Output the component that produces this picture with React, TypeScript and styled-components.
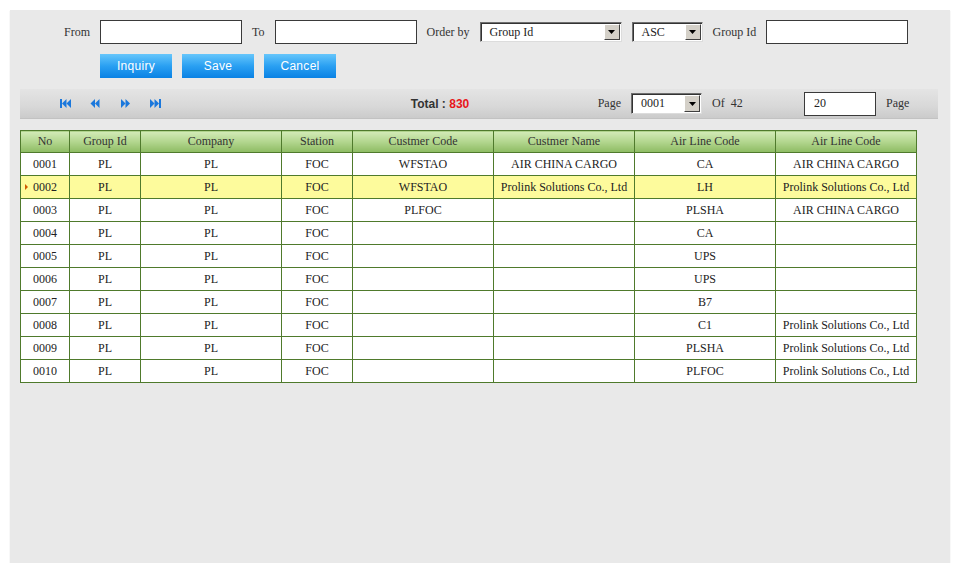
import styled, { createGlobalStyle } from 'styled-components'

const GlobalStyle = createGlobalStyle`
  body {
    margin: 0;
    background: #ffffff;
    font-family: "Liberation Serif", "Times New Roman", serif;
    font-size: 12px;
    color: #222;
  }
`;

type Row = {
  no: string;
  group: string;
  company: string;
  station: string;
  custCode: string;
  custName: string;
  airCode: string;
  airName: string;
};

const rows: Row[] = [
  { no: '0001', group: 'PL', company: 'PL', station: 'FOC', custCode: 'WFSTAO', custName: 'AIR CHINA CARGO', airCode: 'CA', airName: 'AIR CHINA CARGO' },
  { no: '0002', group: 'PL', company: 'PL', station: 'FOC', custCode: 'WFSTAO', custName: 'Prolink Solutions Co., Ltd', airCode: 'LH', airName: 'Prolink Solutions Co., Ltd' },
  { no: '0003', group: 'PL', company: 'PL', station: 'FOC', custCode: 'PLFOC', custName: '', airCode: 'PLSHA', airName: 'AIR CHINA CARGO' },
  { no: '0004', group: 'PL', company: 'PL', station: 'FOC', custCode: '', custName: '', airCode: 'CA', airName: '' },
  { no: '0005', group: 'PL', company: 'PL', station: 'FOC', custCode: '', custName: '', airCode: 'UPS', airName: '' },
  { no: '0006', group: 'PL', company: 'PL', station: 'FOC', custCode: '', custName: '', airCode: 'UPS', airName: '' },
  { no: '0007', group: 'PL', company: 'PL', station: 'FOC', custCode: '', custName: '', airCode: 'B7', airName: '' },
  { no: '0008', group: 'PL', company: 'PL', station: 'FOC', custCode: '', custName: '', airCode: 'C1', airName: 'Prolink Solutions Co., Ltd' },
  { no: '0009', group: 'PL', company: 'PL', station: 'FOC', custCode: '', custName: '', airCode: 'PLSHA', airName: 'Prolink Solutions Co., Ltd' },
  { no: '0010', group: 'PL', company: 'PL', station: 'FOC', custCode: '', custName: '', airCode: 'PLFOC', airName: 'Prolink Solutions Co., Ltd' },
];

const columns = ['No', 'Group Id', 'Company', 'Station', 'Custmer Code', 'Custmer Name', 'Air Line Code', 'Air Line Code'];
const widths = [49, 71, 141, 71, 141, 141, 141, 141];

const FakeSelect = ({ value, width, height }: { value: string; width: number; height: number }) => (
  <SelectBox $width={width} $height={height}>
    <SelectText>{value}</SelectText>
    <SelectArrow>
      <svg width="7" height="4" viewBox="0 0 7 4">
        <polygon points="0,0 7,0 3.5,4" fill="#000" />
      </svg>
    </SelectArrow>
  </SelectBox>
);

const NavIcon = ({ kind }: { kind: 'first' | 'prev' | 'next' | 'last' }) => (
  <NavButton>
    <svg width="11" height="9" viewBox="0 0 11 9" fill="#1b78dc">
      {kind === 'first' && (
        <>
          <rect x="0" y="0" width="2" height="9" />
          <polygon points="6.5,0 2,4.5 6.5,9" />
          <polygon points="11,0 6.5,4.5 11,9" />
        </>
      )}
      {kind === 'prev' && (
        <>
          <polygon points="5,0 0.5,4.5 5,9" />
          <polygon points="9.5,0 5,4.5 9.5,9" />
        </>
      )}
      {kind === 'next' && (
        <>
          <polygon points="1,0 5.5,4.5 1,9" />
          <polygon points="5.5,0 10,4.5 5.5,9" />
        </>
      )}
      {kind === 'last' && (
        <>
          <polygon points="0,0 4.5,4.5 0,9" />
          <polygon points="4.5,0 9,4.5 4.5,9" />
          <rect x="9" y="0" width="2" height="9" />
        </>
      )}
    </svg>
  </NavButton>
);

const App = () => {
  return (
    <>
      <GlobalStyle />
      <Panel>
        <FilterRow>
          <Label>From</Label>
          <TextInput $width={142} />
          <Label>To</Label>
          <TextInput $width={142} />
          <Label>Order by</Label>
          <FakeSelect value="Group Id" width={142} height={20} />
          <FakeSelect value="ASC" width={71} height={20} />
          <Label>Group Id</Label>
          <TextInput $width={142} />
        </FilterRow>
        <ButtonRow>
          <BlueButton>Inquiry</BlueButton>
          <BlueButton>Save</BlueButton>
          <BlueButton>Cancel</BlueButton>
        </ButtonRow>
        <Toolbar>
          <NavGroup>
            <NavIcon kind="first" />
            <NavIcon kind="prev" />
            <NavIcon kind="next" />
            <NavIcon kind="last" />
          </NavGroup>
          <TotalBox>
            Total : <TotalNum>830</TotalNum>
          </TotalBox>
          <PageLabelBox>Page</PageLabelBox>
          <FakeSelect value="0001" width={71} height={21} />
          <OfBox>Of&nbsp;&nbsp;42</OfBox>
          <TextInput $width={72} defaultValue="20" />
          <TailLabel>Page</TailLabel>
        </Toolbar>
        <Grid>
          <colgroup>
            {widths.map((w, i) => (
              <col key={i} style={{ width: w }} />
            ))}
          </colgroup>
          <thead>
            <tr>
              {columns.map((c, i) => (
                <HeadCell key={i}>{c}</HeadCell>
              ))}
            </tr>
          </thead>
          <tbody>
            {rows.map((r) => {
              const active = r.no === '0002';
              return (
                <BodyRow key={r.no} $active={active}>
                  <Cell>
                    {active && <Marker />}
                    {r.no}
                  </Cell>
                  <Cell>{r.group}</Cell>
                  <Cell>{r.company}</Cell>
                  <Cell>{r.station}</Cell>
                  <Cell>{r.custCode}</Cell>
                  <Cell>{r.custName}</Cell>
                  <Cell>{r.airCode}</Cell>
                  <Cell>{r.airName}</Cell>
                </BodyRow>
              );
            })}
          </tbody>
        </Grid>
      </Panel>
    </>
  )
}

const Panel = styled.div`
  margin: 10px 0 0 10px;
  width: 940px;
  height: 553px;
  box-sizing: border-box;
  background: #e9e9e9;
  padding: 10px 0 0 10px;
  box-shadow: 0 1px 1px #d4d4d4;
`;

const FilterRow = styled.div`
  display: flex;
  align-items: center;
  gap: 10px;
  padding-left: 44px;
  height: 24px;
`;

const Label = styled.span`
  color: #333;
  font-size: 12px;
  white-space: nowrap;
`;

const TailLabel = styled(Label)`
  margin-left: 10px;
`;

const TextInput = styled.input<{ $width: number }>`
  width: ${(p) => p.$width}px;
  height: 24px;
  box-sizing: border-box;
  border: 1px solid #3a3a3a;
  background: #fff;
  padding: 0 0 0 9px;
  font-family: "Liberation Serif", serif;
  font-size: 12px;
  color: #222;
  outline: none;
`;

const SelectBox = styled.div<{ $width: number; $height: number }>`
  width: ${(p) => p.$width}px;
  height: ${(p) => p.$height}px;
  box-sizing: border-box;
  display: flex;
  align-items: center;
  background: #fff;
  border-top: 1px solid #6f6f6f;
  border-left: 1px solid #6f6f6f;
  border-bottom: 1px solid #dcdcdc;
  border-right: 1px solid #dcdcdc;
  box-shadow: inset 1px 1px 0 #333;
  padding: 1px;
`;

const SelectText = styled.span`
  flex: 1;
  padding-left: 8px;
  font-size: 12px;
  color: #222;
`;

const SelectArrow = styled.div`
  width: 16px;
  height: 100%;
  box-sizing: border-box;
  background: #d4d0c8;
  border-top: 1px solid #fff;
  border-left: 1px solid #fff;
  border-right: 1px solid #404040;
  border-bottom: 1px solid #404040;
  display: flex;
  align-items: center;
  justify-content: center;
`;

const ButtonRow = styled.div`
  display: flex;
  gap: 10px;
  margin-top: 10px;
  padding-left: 80px;
`;

const BlueButton = styled.button`
  width: 72px;
  height: 24px;
  border: none;
  padding: 0;
  background: linear-gradient(to bottom, #66c6fb 0%, #2aa0f2 50%, #0a82e4 100%);
  color: #fff;
  font-family: "Liberation Sans", Arial, sans-serif;
  font-size: 12px;
  letter-spacing: 0.3px;
`;

const Toolbar = styled.div`
  display: flex;
  align-items: center;
  margin-top: 11px;
  width: 918px;
  height: 30px;
  box-sizing: border-box;
  background: linear-gradient(to bottom, #e4e4e4 0%, #d8d8d8 60%, #cbcbcb 100%);
  border-bottom: 1px solid #c2c2c2;
`;

const NavGroup = styled.div`
  display: flex;
  align-items: center;
  gap: 19px;
  width: 370px;
  box-sizing: border-box;
  padding-left: 40px;
`;

const NavButton = styled.span`
  display: inline-flex;
  width: 11px;
  height: 9px;
`;

const TotalBox = styled.div`
  width: 100px;
  text-align: center;
  font-family: "Liberation Sans", Arial, sans-serif;
  font-weight: bold;
  font-size: 12px;
  color: #333;
`;

const TotalNum = styled.span`
  color: #e8161a;
`;

const PageLabelBox = styled.div`
  width: 141px;
  box-sizing: border-box;
  padding-right: 10px;
  text-align: right;
  color: #333;
`;

const OfBox = styled.div`
  width: 102px;
  box-sizing: border-box;
  padding-left: 10px;
  color: #333;
`;

const Grid = styled.table`
  margin-top: 11px;
  width: 896px;
  border-collapse: collapse;
  table-layout: fixed;
  background: #fff;
  font-family: "Liberation Serif", "Times New Roman", serif;
  font-size: 12px;
`;

const HeadCell = styled.th`
  height: 22px;
  padding: 0;
  box-sizing: border-box;
  border: 1px solid #4f7a2c;
  background: linear-gradient(to bottom, #d3ebb8 0%, #b2d68e 50%, #8dbb62 100%);
  font-family: "Liberation Serif", "Times New Roman", serif;
  font-weight: normal;
  font-size: 12px;
  color: #333;
  text-align: center;
`;

const BodyRow = styled.tr<{ $active: boolean }>`
  background: ${(p) => (p.$active ? '#fdfb9c' : '#ffffff')};
`;

const Cell = styled.td`
  position: relative;
  height: 23px;
  padding: 0;
  box-sizing: border-box;
  border: 1px solid #4f7a2c;
  text-align: center;
  font-family: "Liberation Serif", "Times New Roman", serif;
  font-size: 12px;
  color: #222;
  white-space: nowrap;
  overflow: hidden;
`;

const Marker = styled.span`
  position: absolute;
  left: 4px;
  top: 8px;
  width: 0;
  height: 0;
  border-top: 3px solid transparent;
  border-bottom: 3px solid transparent;
  border-left: 3px solid #d05a00;
`;

export default App
